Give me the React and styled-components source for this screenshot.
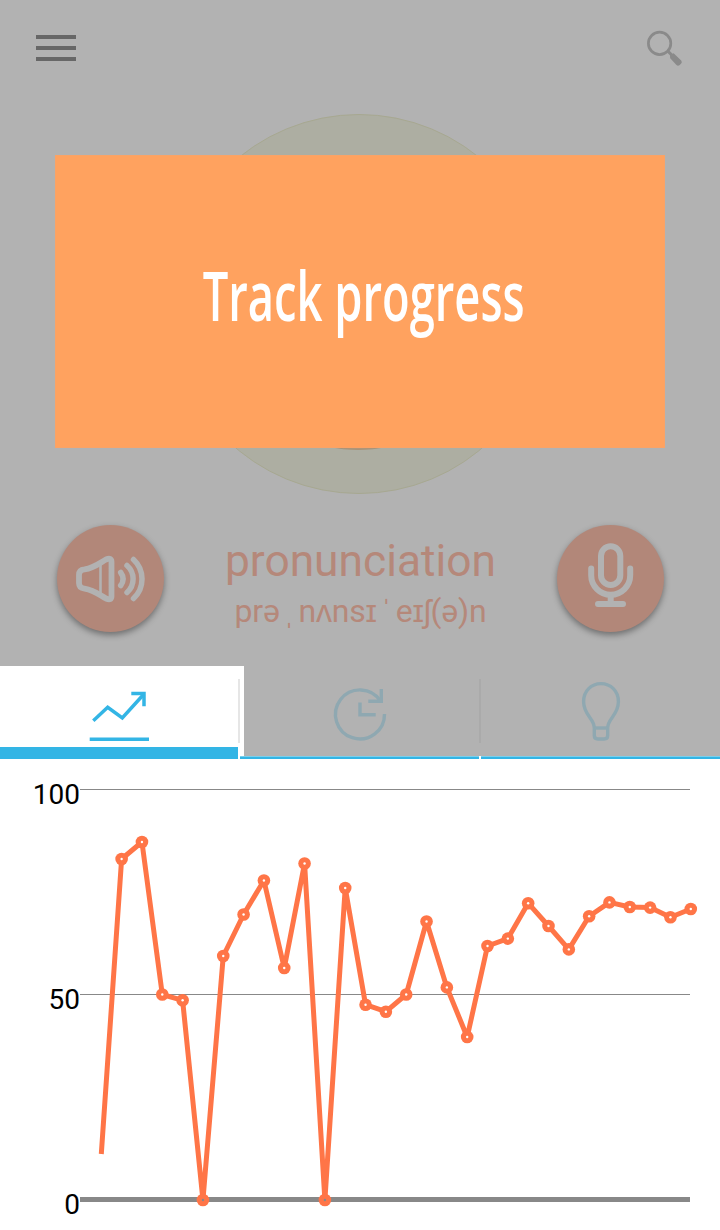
import React from "react";
import styled, { createGlobalStyle } from "styled-components";

const GlobalStyle = createGlobalStyle`
  *, *::before, *::after { box-sizing: border-box; }
  body { margin: 0; background: #fff; font-family: Roboto, "Open Sans", sans-serif; }
  svg { display: block; }
`;

const Screen = styled.main`
  width: 720px;
  height: 1230px;
  display: flex;
  flex-direction: column;
  overflow: hidden;
  background: #fff;
`;

const Stage = styled.section`
  position: relative;
  height: 666px;
  background: #b2b2b2;
  display: flex;
  flex-direction: column;
  justify-content: space-between;
`;

const TopBar = styled.header`
  display: flex;
  justify-content: space-between;
  padding: 28px 36px 0;
`;

const MenuButton = styled.div`
  display: flex;
  flex-direction: column;
  gap: 7px;
  padding-top: 7px;
`;

const MenuBar = styled.span`
  width: 40px;
  height: 4px;
  background: #676767;
`;

const Disc = styled.div`
  position: absolute;
  left: ${(p) => p.$cx - p.$r}px;
  top: ${(p) => p.$cy - p.$r}px;
  width: ${(p) => p.$r * 2}px;
  height: ${(p) => p.$r * 2}px;
  border-radius: 50%;
  background: ${(p) => p.$fill};
  border: 1px solid ${(p) => p.$edge};
`;

const Banner = styled.div`
  position: absolute;
  left: 55px;
  top: 155px;
  width: 610px;
  height: 293px;
  display: flex;
  align-items: flex-start;
  justify-content: center;
  padding-top: 99px;
  background: #ffa25f;
  border: 1px solid #f9a367;
`;

const BannerTitle = styled.h1`
  margin: 0 0 0 8px;
  font: 600 68px/80px "Open Sans", sans-serif;
  color: #fff;
  white-space: nowrap;
  transform: scaleX(0.666);
`;

const WordRow = styled.div`
  display: flex;
  justify-content: space-between;
  padding: 0 56px 34px 57px;
`;

const RoundButton = styled.div`
  width: 107px;
  height: 107px;
  border-radius: 50%;
  background: #b28779;
  box-shadow: 0 3px 6px rgba(0, 0, 0, 0.38);
`;

const Word = styled.div`
  display: flex;
  flex-direction: column;
  align-items: center;
  color: #b5887a;
  white-space: nowrap;
`;

const Term = styled.div`
  font-size: 44.3px;
  line-height: 54px;
  margin-top: 9px;
`;

const Phonetic = styled.div`
  font-size: 32px;
  line-height: 38px;
  margin-top: 4px;
  letter-spacing: -0.2px;
  word-spacing: -3.5px;
`;

const Tabs = styled.nav`
  display: flex;
  height: 93px;
`;

const Tab = styled.div`
  position: relative;
  width: ${(p) => p.$width}px;
  display: flex;
  flex-direction: column;
  background: ${(p) => (p.$active ? "#fff" : "#b2b2b2")};
  border-left: ${(p) => p.$lead || 0}px solid #fff;
`;

const TabBody = styled.div`
  flex: 1;
  display: flex;
  justify-content: space-between;
`;

const TabDivider = styled.span`
  width: 2px;
  height: 64px;
  margin-top: 13px;
  background: ${(p) => p.$color};
`;

const TabFooter = styled.div`
  display: flex;
  height: ${(p) => p.$height}px;
  margin-left: -${(p) => p.$lead || 0}px;
  border-right: ${(p) => p.$gap}px solid #fff;
  background: #33b5e5;
  box-shadow: inset 0 ${(p) => (p.$height === 3 ? 1 : 0)}px #79cfec;
`;

const Chart = styled.section`
  display: flex;
  height: 471px;
`;

const Axis = styled.div`
  width: 80px;
  display: flex;
  flex-direction: column;
  align-items: flex-end;
  gap: 173px;
  padding-top: 20px;
`;

const AxisLabel = styled.span`
  font-size: 28px;
  line-height: 32px;
  height: 32px;
  color: #000;
`;

const values = [
  1154, 859, 842, 994.5, 1000.3, 1200, 956, 914.5, 880.5, 968, 863.5, 1200, 888,
  1004.7, 1011.7, 994.5, 921.5, 987.4, 1037, 946, 938.6, 903.2, 926, 949.4, 916.2,
  902.4, 907, 907.6, 917.3, 909,
];
const points = values.map((v, i) => [21.3 + i * 20.327, v - 759]);

const SearchIcon = () => (
  <svg width="40" height="40" viewBox="644 28 40 40" fill="none" stroke="#8a8a8a">
    <circle cx="659.6" cy="43.4" r="11.2" strokeWidth="2.7" />
    <path d="M667.3 50.6 L672 55.3" strokeWidth="3" />
    <path d="M669.9 55.2 L673.6 53.3 L681.2 60.6 Q682.6 62.3 681 63.8 L679.4 65.3 Q677.8 66.2 676.2 64.8 L670.2 58.2 Z" fill="#8a8a8a" stroke="none" />
  </svg>
);

const SpeakerIcon = () => (
  <svg width="107" height="107" fill="none" stroke="#b2b2b2" strokeWidth="5.8" strokeLinecap="round" strokeLinejoin="round">
    <path d="M22 54 V50 Q22 45 27.5 44.4 C37 43 42 38.5 49 34.5 Q54.5 32 54.5 37 V71 Q54.5 76 49 73.5 C42 69.5 37 65 27.5 63.6 Q22 63 22 58 Z" />
    <path d="M43.5 39 V69" strokeWidth="2.6" />
    <path d="M63.7 47.5 Q68.5 54 63.7 60.5" strokeWidth="5.5" />
    <path d="M70 40.5 A18 18 0 0 1 70 67.5" strokeWidth="5.5" />
    <path d="M76.5 34.5 A26.6 26.6 0 0 1 76.5 73.5" strokeWidth="5.5" />
  </svg>
);

const MicIcon = () => (
  <svg width="107" height="107" fill="none" stroke="#b2b2b2" strokeWidth="6" strokeLinecap="round">
    <rect x="44" y="21.3" width="19.3" height="38.7" rx="9.65" />
    <path d="M34.2 43.5 V50.3 A19.5 19.5 0 0 0 73.2 50.3 V43.5" />
    <path d="M53.7 70 V79 M41 79 H66" />
  </svg>
);

const TrendIcon = () => (
  <svg width="238" height="81" viewBox="0 666 238 81" fill="none" stroke="#33b5e5" strokeWidth="3.5">
    <path d="M93.3 720.7 L107.7 707.3 L122.3 718 L144 694" />
    <path d="M131.3 693.6 H144 V706.3" />
    <path d="M89.7 739.2 H149" />
  </svg>
);

const HistoryIcon = () => (
  <svg width="233" height="90" viewBox="244 666 233 90" fill="none" stroke="#8fa8b1" strokeWidth="3.4">
    <path d="M384.5 714 A24.5 24.5 0 1 1 380.5 701" />
    <path d="M381.3 689 V701.3 H368.3" />
    <path d="M360 702.5 V714.7 H375.7" />
  </svg>
);

const BulbIcon = () => (
  <svg width="239" height="90" viewBox="481 666 239 90" fill="none" stroke="#8fa8b1" strokeWidth="3.4">
    <path d="M594.3 728 C594.3 718 583.6 715.5 583.6 701.5 C583.6 691 591.3 683.6 601 683.6 C610.7 683.6 618.4 691 618.4 701.5 C618.4 715.5 607.7 718 607.7 728 V735.5 Q607.7 739 604.2 739 H597.8 Q594.3 739 594.3 735.5 Z" />
    <path d="M594.3 728 H607.7" />
  </svg>
);

const ProgressPlot = () => (
  <svg width="640" height="471">
    <g fill="#888">
      <rect y="30" width="610" height="1" />
      <rect y="235" width="610" height="1" />
      <rect y="438" width="610" height="5" />
    </g>
    <polyline
      points={points.map((p) => p.join(",")).join(" ")}
      fill="none"
      stroke="#ff7547"
      strokeWidth="5"
      strokeLinejoin="round"
    />
    {points.slice(1).map(([x, y], i) => (
      <g key={i}>
        <circle cx={x} cy={y} r="6.3" fill="#ff7547" />
        <circle cx={x} cy={y} r="1.2" fill={y > 440 ? "#888" : "#fff"} />
      </g>
    ))}
  </svg>
);

export default function App() {
  return (
    <Screen>
      <GlobalStyle />
      <Stage>
        <TopBar>
          <MenuButton>
            <MenuBar />
            <MenuBar />
            <MenuBar />
          </MenuButton>
          <SearchIcon />
        </TopBar>
        <Disc $cx={359} $cy={303.5} $r={190} $fill="#adaea2" $edge="#a7a891" />
        <Disc $cx={358} $cy={304.5} $r={145} $fill="#b29577" $edge="#a79379" />
        <Banner>
          <BannerTitle>Track progress</BannerTitle>
        </Banner>
        <WordRow>
          <RoundButton>
            <SpeakerIcon />
          </RoundButton>
          <Word>
            <Term>pronunciation</Term>
            <Phonetic>prə ˌ nʌnsɪ ˈ eɪʃ(ə)n</Phonetic>
          </Word>
          <RoundButton>
            <MicIcon />
          </RoundButton>
        </WordRow>
      </Stage>
      <Tabs>
        <Tab $active $width={240}>
          <TabBody>
            <TrendIcon />
            <TabDivider $color="#e6e6e6" />
          </TabBody>
          <TabFooter $height={12} $gap={2} />
        </Tab>
        <Tab $width={241} $lead={4}>
          <TabBody>
            <HistoryIcon />
            <TabDivider $color="#aaa" />
          </TabBody>
          <TabFooter $height={3} $gap={2} $lead={4} />
        </Tab>
        <Tab $width={239}>
          <TabBody>
            <BulbIcon />
          </TabBody>
          <TabFooter $height={3} $gap={0} />
        </Tab>
      </Tabs>
      <Chart>
        <Axis>
          <AxisLabel>100</AxisLabel>
          <AxisLabel>50</AxisLabel>
          <AxisLabel>0</AxisLabel>
        </Axis>
        <ProgressPlot />
      </Chart>
    </Screen>
  );
}
